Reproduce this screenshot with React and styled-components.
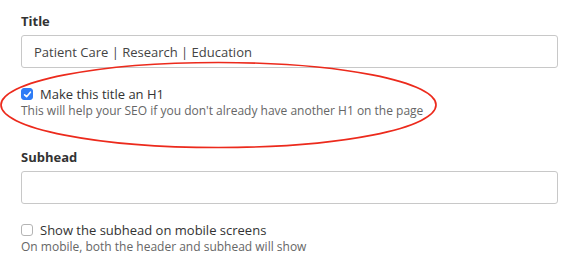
import React from "react";
import styled, { createGlobalStyle } from "styled-components";

const Global = createGlobalStyle`
  html, body { margin: 0; padding: 0; background: #fff; }
  body { font-family: "Open Sans", "Noto Sans", sans-serif; color: #333; }
`;

const Page = styled.div`
  position: relative;
  width: 581px;
  height: 267px;
  box-sizing: border-box;
  padding: 12px 23px 0 21px;
  overflow: hidden;
`;

const Field = styled.div`
  display: flex;
  flex-direction: column;
  margin-bottom: ${(p) => p.$mb || 0}px;
`;

const Label = styled.label`
  font-size: 13px;
  font-weight: 700;
  line-height: 18px;
  color: #333;
  margin-bottom: 5px;
`;

const Input = styled.input`
  box-sizing: border-box;
  height: 33px;
  width: 100%;
  border: 1px solid #c8c8c8;
  border-radius: 3px;
  padding: 0 12px;
  font-family: inherit;
  font-size: 13px;
  color: #444;
  background: #fff;
  outline: none;
`;

const CheckRow = styled.label`
  display: flex;
  align-items: center;
  gap: 7px;
  font-size: 13px;
  line-height: 18px;
  color: #333;
`;

const Box = styled.span`
  box-sizing: border-box;
  width: 12px;
  height: 12px;
  border-radius: 3px;
  display: flex;
  align-items: center;
  justify-content: center;
  background: ${(p) => (p.$checked ? "#2e7cf6" : "#fff")};
  border: 1px solid ${(p) => (p.$checked ? "#2e7cf6" : "#b4b4b4")};
`;

const Help = styled.div`
  font-size: 12px;
  line-height: 16px;
  color: #666;
`;

const Annotation = styled.svg`
  position: absolute;
  left: 0;
  top: 0;
  pointer-events: none;
`;

function Check({ checked }) {
  return (
    <Box $checked={checked}>
      {checked && (
        <svg width="9" height="9" viewBox="0 0 9 9">
          <path d="M1.6 4.8 L3.6 6.7 L7.4 2.2" fill="none" stroke="#fff" strokeWidth="1.6" strokeLinecap="round" strokeLinejoin="round" />
        </svg>
      )}
    </Box>
  );
}

export default function App() {
  return (
    <>
      <Global />
      <Page>
        <Field $mb={17}>
          <Label>Title</Label>
          <Input defaultValue="Patient Care | Research | Education" />
        </Field>
        <Field $mb={29}>
          <CheckRow>
            <Check checked />
            Make this title an H1
          </CheckRow>
          <Help>This will help your SEO if you don't already have another H1 on the page</Help>
        </Field>
        <Field $mb={17}>
          <Label>Subhead</Label>
          <Input />
        </Field>
        <Field>
          <CheckRow>
            <Check />
            Show the subhead on mobile screens
          </CheckRow>
          <Help>On mobile, both the header and subhead will show</Help>
        </Field>
        <Annotation width="581" height="267" viewBox="0 0 581 267">
          <ellipse cx="218.5" cy="105" rx="217.5" ry="42.5" fill="none" stroke="#ec2a1c" strokeWidth="1.7" />
        </Annotation>
      </Page>
    </>
  );
}
